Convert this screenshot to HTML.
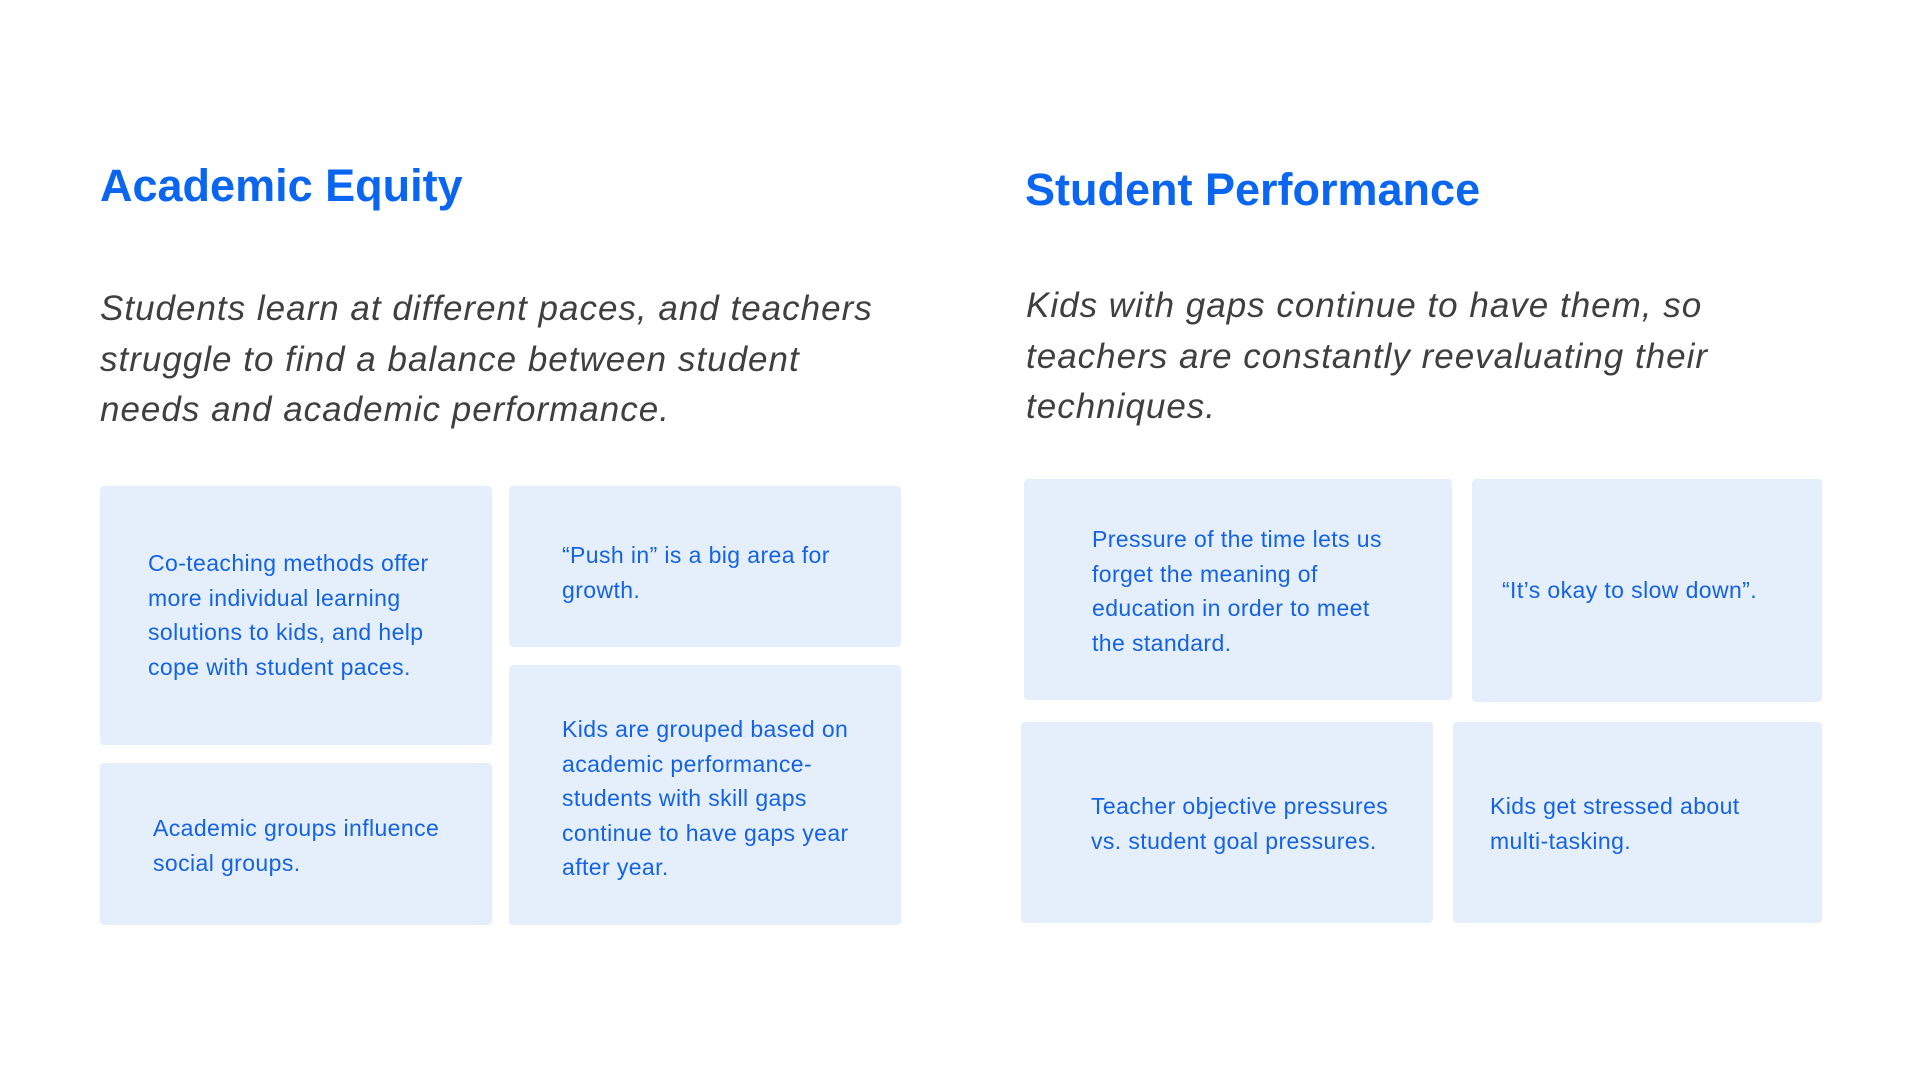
<!DOCTYPE html>
<html><head><meta charset="utf-8"><style>
body{margin:0;width:1920px;height:1080px;background:#fff;position:relative;overflow:hidden;font-family:"Liberation Sans",sans-serif}
.t{position:absolute;color:#0a66f0;font-weight:bold;font-size:45px;margin:0;line-height:56px}
.p{position:absolute;color:#3f3f3f;font-style:italic;font-size:35px;line-height:50.5px;letter-spacing:1px}
.b{position:absolute;background:#e5eefb;border-radius:4px}
.x{position:absolute;color:#1463e6;font-size:23px;line-height:34.5px;letter-spacing:0.4px}
</style></head><body>
<div class="t" style="left:100px;top:158px">Academic Equity</div>
<div class="t" style="left:1025px;top:162px">Student Performance</div>
<div class="p" style="left:100px;top:284px;width:880px">Students learn at different paces, and teachers<br>struggle to find a balance between student<br>needs and academic performance.</div>
<div class="p" style="left:1026px;top:281px;width:880px">Kids with gaps continue to have them, so<br>teachers are constantly reevaluating their<br>techniques.</div>

<div class="b" style="left:100px;top:486px;width:392px;height:259px"></div>
<div class="b" style="left:509px;top:486px;width:392px;height:161px"></div>
<div class="b" style="left:100px;top:763px;width:392px;height:162px"></div>
<div class="b" style="left:509px;top:665px;width:392px;height:260px"></div>

<div class="x" style="left:148px;top:546px">Co-teaching methods offer<br>more individual learning<br>solutions to kids, and help<br>cope with student paces.</div>
<div class="x" style="left:562px;top:538px">“Push in” is a big area for<br>growth.</div>
<div class="x" style="left:153px;top:811px">Academic groups influence<br>social groups.</div>
<div class="x" style="left:562px;top:712px">Kids are grouped based on<br>academic performance-<br>students with skill gaps<br>continue to have gaps year<br>after year.</div>

<div class="b" style="left:1024px;top:479px;width:428px;height:221px"></div>
<div class="b" style="left:1472px;top:479px;width:350px;height:223px"></div>
<div class="b" style="left:1021px;top:722px;width:412px;height:201px"></div>
<div class="b" style="left:1453px;top:722px;width:369px;height:201px"></div>

<div class="x" style="left:1092px;top:522px">Pressure of the time lets us<br>forget the meaning of<br>education in order to meet<br>the standard.</div>
<div class="x" style="left:1502px;top:573px">“It’s okay to slow down”.</div>
<div class="x" style="left:1091px;top:789px">Teacher objective pressures<br>vs. student goal pressures.</div>
<div class="x" style="left:1490px;top:789px">Kids get stressed about<br>multi-tasking.</div>
</body></html>
